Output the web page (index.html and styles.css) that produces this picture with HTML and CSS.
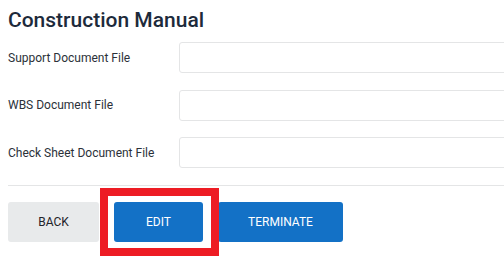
FILE: index.html
```html
<!DOCTYPE html>
<html lang="en">
<head>
  <meta charset="UTF-8"/>
  <title>Construction Manual</title>
  <link rel="stylesheet" href="styles.css">
</head>
<body>
  <div class="panel">
    <h2 class="title">Construction Manual</h2>

    <!-- Documents -->
    <div class="field">
      <label class="field-label">Support Document File</label>
      <input class="field-input" type="text">
    </div>
    <div class="field">
      <label class="field-label">WBS Document File</label>
      <input class="field-input" type="text">
    </div>
    <div class="field">
      <label class="field-label">Check Sheet Document File</label>
      <input class="field-input" type="text">
    </div>

    <hr class="divider">

    <!-- Actions -->
    <div class="actions">
      <button class="btn btn-back">BACK</button>
      <button class="btn btn-primary btn-edit">EDIT<span class="highlight"></span></button>
      <button class="btn btn-primary btn-terminate">TERMINATE</button>
    </div>
  </div>
</body>
</html>
```

FILE: styles.css
```css
:root {
  --text-color: #212830;
  --title-color: #1d2a3b;
  --border-color: #e4e5e6;
  --primary: #1371c6;
  --muted-bg: #e8eaeb;
  --font-family: 'Roboto', 'Liberation Sans', sans-serif;
}
* { margin:0; padding:0; box-sizing:border-box }
html, body { width:100%; height:100%; overflow:hidden; background:#fff }
body { padding:8px; font-family: var(--font-family); color: var(--text-color) }

.panel { width:560px }

.title {
  font-size:21px;
  line-height:24px;
  font-weight:500;
  color: var(--title-color);
  margin-bottom:10px;
}

/* Fields */
.field {
  display:grid;
  grid-template-columns:171px 1fr;
  align-items:center;
  margin-bottom:16.5px;
}
.field:last-of-type { margin-bottom:0 }
.field-label { font-size:12px; line-height:16px; color:#2b3139 }
.field-input {
  height:31px;
  border:1px solid var(--border-color);
  border-radius:3px;
  background:#fff;
  outline:none;
}

.divider {
  border:none;
  border-top:1px solid var(--border-color);
  margin:16px 0;
}

/* Buttons */
.actions { display:flex; gap:15px }
.btn {
  position:relative;
  height:40px;
  border:none;
  border-radius:3px;
  font-family: var(--font-family);
  font-size:12px;
  font-weight:400;
  cursor:pointer;
}
.btn-back { width:91px; background: var(--muted-bg); color:#1f2329 }
.btn-primary { background: var(--primary); color:#fff }
.btn-edit { width:89px }
.btn-terminate { width:125px }

/* Annotation box round EDIT */
.highlight {
  position:absolute;
  left:-14px; top:-14px; right:-16px; bottom:-14px;
  border:8px solid #ed1c24;
  pointer-events:none;
  z-index:1;
}
```
